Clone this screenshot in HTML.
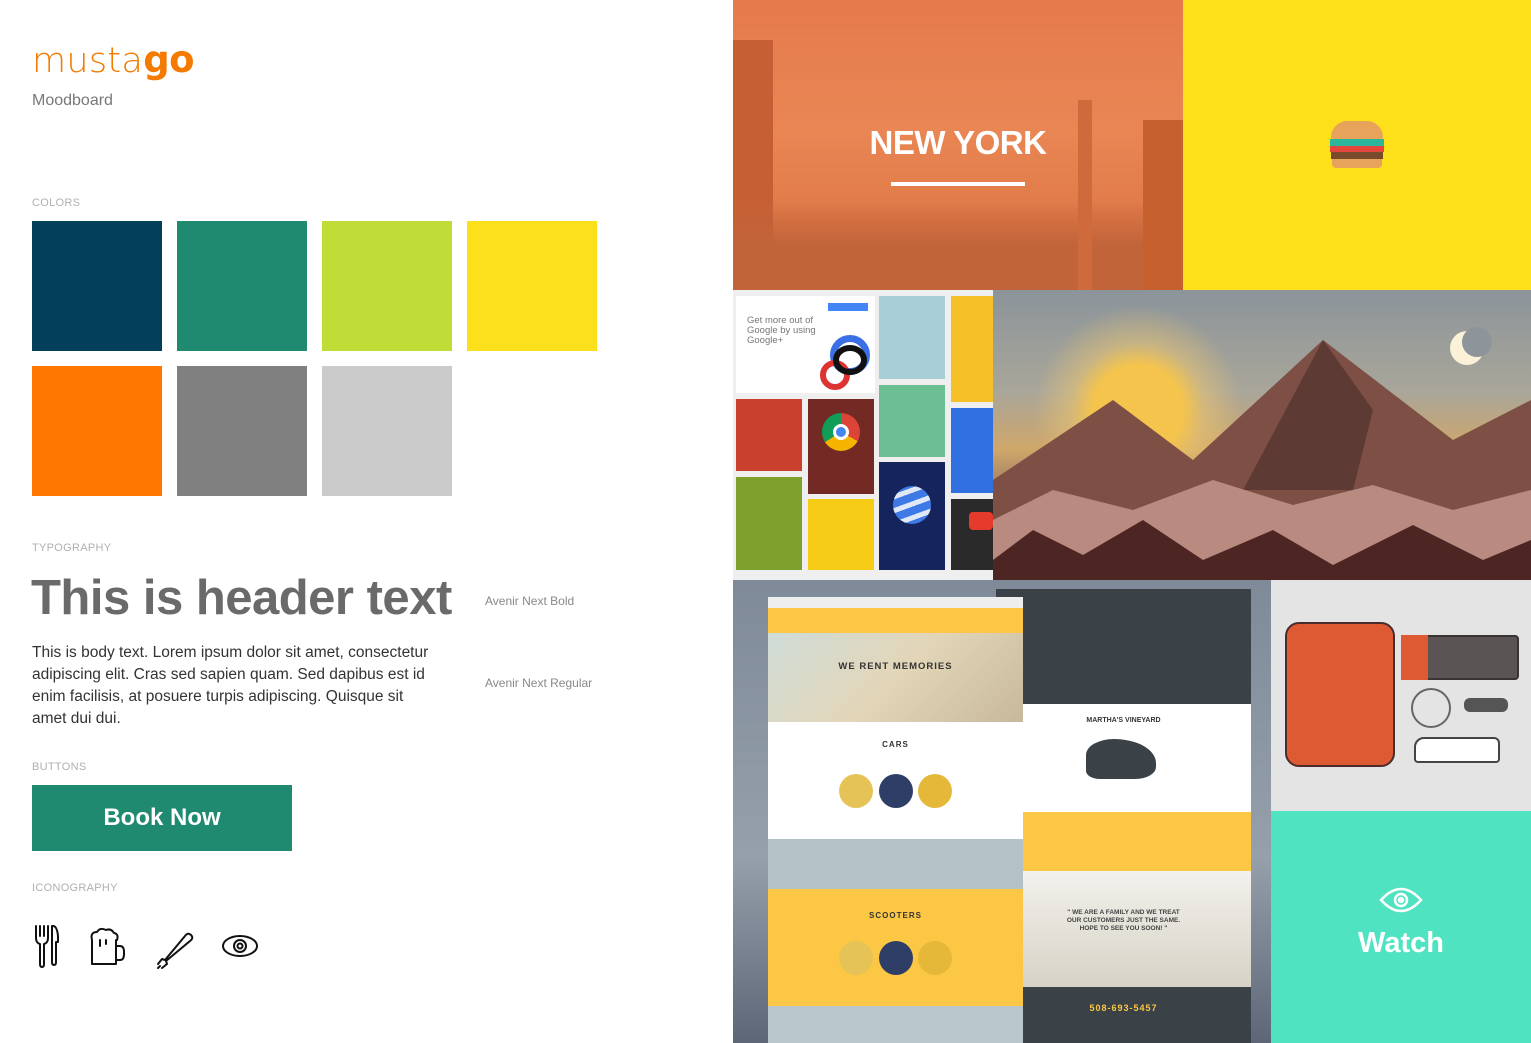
<!DOCTYPE html>
<html><head><meta charset="utf-8"><style>
*{margin:0;padding:0;box-sizing:border-box}
body{width:1531px;height:1043px;overflow:hidden;background:#fff;font-family:"Liberation Sans",sans-serif;position:relative}
.a{position:absolute}
.lbl{position:absolute;left:32px;font-size:11px;color:#b0b0b0;letter-spacing:.3px}
.sw{position:absolute;width:130px;height:130px}
</style></head><body>
<div class="a" style="left:32px;top:38px;font-size:35px;color:#f47b00;letter-spacing:0.3px;font-family:'DejaVu Sans',sans-serif;font-weight:200">musta<b style="font-size:37px;font-weight:bold;letter-spacing:-0.5px">go</b></div>
<div class="a" style="left:32px;top:92px;font-size:16px;color:#777">Moodboard</div>

<div class="lbl" style="top:197px">COLORS</div>
<div class="sw" style="left:32px;top:221px;background:#023f5a"></div>
<div class="sw" style="left:177px;top:221px;background:#1f8a6f"></div>
<div class="sw" style="left:322px;top:221px;background:#bfdc37"></div>
<div class="sw" style="left:467px;top:221px;background:#fde01c"></div>
<div class="sw" style="left:32px;top:366px;background:#fe7600"></div>
<div class="sw" style="left:177px;top:366px;background:#808080"></div>
<div class="sw" style="left:322px;top:366px;background:#cbcbcb"></div>

<div class="lbl" style="top:542px">TYPOGRAPHY</div>
<div class="a" style="left:31px;top:570px;font-size:49px;font-weight:bold;color:#6a6a6a;letter-spacing:-0.5px;white-space:nowrap">This is header text</div>
<div class="a" style="left:485px;top:594px;font-size:12px;color:#888">Avenir Next Bold</div>
<div class="a" style="left:32px;top:642px;width:403px;font-size:15.5px;line-height:22px;color:#333">This is body text. Lorem ipsum dolor sit amet, consectetur adipiscing elit. Cras sed sapien quam. Sed dapibus est id enim facilisis, at posuere turpis adipiscing. Quisque sit amet dui dui.</div>
<div class="a" style="left:485px;top:676px;font-size:12px;color:#888">Avenir Next Regular</div>

<div class="lbl" style="top:761px">BUTTONS</div>
<div class="a" style="left:32px;top:785px;width:260px;height:66px;background:#1f8a6f;color:#fff;font-weight:bold;font-size:24px;text-align:center;line-height:66px">Book Now</div>

<div class="lbl" style="top:882px">ICONOGRAPHY</div>
<svg class="a" style="left:30px;top:920px" width="240" height="52" viewBox="0 0 240 52" fill="none" stroke="#111" stroke-width="2" stroke-linecap="round" stroke-linejoin="round">
<path d="M6 6v12q0 5 4 6v20q0 3 2 3t2-3V24q4-1 4-6V6M10 6v10M14 6v10"/>
<path d="M23 6q4 0 5 10v6h-2v20q0 3-2 3t-2-3V6z"/>
<path d="M62 20q-2-8 5-8q3-5 9-2q5-2 8 3q5 1 3 7M62 20v24h24V20M86 26h4q4 0 4 6v2q0 6-4 6h-4M70 20v6M76 20v4"/>
<path d="M128 44l4-5 3 1 20-24q3-4 6-1t-1 6l-24 20 1 3-5 4M130 46l-2 2"/>
<ellipse cx="210" cy="26" rx="17" ry="10"/><circle cx="210" cy="26" r="6"/><circle cx="210" cy="26" r="2.5"/>
</svg>

<!-- NY -->
<div class="a" style="left:733px;top:0;width:450px;height:290px;background:linear-gradient(180deg,#e57a4c 0%,#e98654 45%,#d86f3f 100%);overflow:hidden">
<div class="a" style="left:0;top:40px;width:40px;height:250px;background:#c75f34"></div>
<div class="a" style="left:0;top:200px;width:450px;height:90px;background:linear-gradient(180deg,rgba(190,90,45,0),#c2643a 50%)"></div>
<div class="a" style="left:345px;top:100px;width:14px;height:190px;background:#cf6a3c"></div>
<div class="a" style="left:410px;top:120px;width:40px;height:170px;background:#c6612f"></div>
<div class="a" style="left:0;top:124px;width:450px;text-align:center;color:#fff;font-weight:bold;font-size:33px;letter-spacing:-0.5px">NEW YORK</div>
<div class="a" style="left:158px;top:182px;width:134px;height:4px;background:#fff"></div>
</div>
<div class="a" style="left:1183px;top:0;width:348px;height:290px;background:#fde01a">
<div class="a" style="left:148px;top:121px;width:52px;height:18px;background:#e8a35a;border-radius:26px 26px 3px 3px"></div>
<div class="a" style="left:147px;top:139px;width:54px;height:7px;background:#2bb59a"></div>
<div class="a" style="left:147px;top:146px;width:54px;height:6px;background:#e5463c"></div>
<div class="a" style="left:148px;top:152px;width:52px;height:7px;background:#7a4a2d"></div>
<div class="a" style="left:149px;top:159px;width:50px;height:9px;background:#e8a35a;border-radius:0 0 4px 4px"></div>
</div>

<!-- google -->
<div class="a" style="left:733px;top:290px;width:260px;height:290px;background:#efefef;overflow:hidden">
<div class="a" style="left:3px;top:6px;width:139px;height:97px;background:#fff"></div>
<div class="a" style="left:14px;top:26px;font-size:9.5px;line-height:10px;color:#777">Get more out of<br>Google by using<br>Google+</div>
<div class="a" style="left:95px;top:13px;width:40px;height:8px;background:#4285f4"></div>
<div class="a" style="left:97px;top:45px;width:40px;height:40px;border:7px solid #3a6fe5;border-radius:50%"></div>
<div class="a" style="left:87px;top:70px;width:30px;height:30px;border:6px solid #d33;border-radius:50%"></div>
<div class="a" style="left:100px;top:55px;width:34px;height:30px;border:6px solid #111;border-radius:50%"></div>
<div class="a" style="left:146px;top:6px;width:66px;height:83px;background:#a8ced8"></div>
<div class="a" style="left:218px;top:6px;width:42px;height:106px;background:#f6c029"></div>
<div class="a" style="left:3px;top:109px;width:66px;height:72px;background:#c9412c"></div>
<div class="a" style="left:75px;top:109px;width:66px;height:95px;background:#742a24"></div>
<div class="a" style="left:89px;top:123px;width:38px;height:38px;border-radius:50%;background:conic-gradient(#db4437 0 33%,#f4b400 0 66%,#0f9d58 0);"></div>
<div class="a" style="left:100px;top:134px;width:16px;height:16px;border-radius:50%;background:#4285f4;border:3px solid #fff"></div>
<div class="a" style="left:146px;top:95px;width:66px;height:72px;background:#6cbf93"></div>
<div class="a" style="left:218px;top:118px;width:42px;height:85px;background:#2f6fe0"></div>
<div class="a" style="left:3px;top:187px;width:66px;height:93px;background:#7ea12d"></div>
<div class="a" style="left:75px;top:209px;width:66px;height:71px;background:#f5cb16"></div>
<div class="a" style="left:146px;top:172px;width:66px;height:108px;background:#16245e"></div>
<div class="a" style="left:160px;top:196px;width:38px;height:38px;border-radius:50%;background:repeating-linear-gradient(160deg,#3d7ae6 0 8px,#dfe8f6 8px 13px)"></div>
<div class="a" style="left:218px;top:209px;width:42px;height:71px;background:#2a2a2a"></div>
<div class="a" style="left:236px;top:222px;width:24px;height:18px;background:#e53a2c;border-radius:4px"></div>
</div>

<!-- mountains -->
<div class="a" style="left:993px;top:290px;width:538px;height:290px;overflow:hidden;background:linear-gradient(180deg,#8b949a 0%,#a9a69a 35%,#cfa76a 55%,#9a7a66 70%,#6b3f35 100%)">
<div class="a" style="left:40px;top:15px;width:210px;height:210px;border-radius:50%;background:radial-gradient(circle,#f5c44c 0 30%,rgba(240,200,110,.5) 45%,rgba(240,200,110,0) 70%)"></div>
<svg class="a" style="left:0;top:0" width="538" height="290">
<polygon points="0,190 120,110 200,170 330,50 460,150 538,110 538,290 0,290" fill="#7d4f45"/>
<polygon points="330,50 380,120 360,200 250,200" fill="#5e3a35"/>
<polygon points="0,230 60,200 140,220 220,190 300,215 380,195 460,220 538,200 538,290 0,290" fill="#b98a80"/>
<polygon points="0,270 40,240 90,265 150,230 210,270 280,240 340,275 420,235 490,270 538,250 538,290 0,290" fill="#4d2623"/>
<circle cx="474" cy="58" r="17" fill="#fbf1d8"/><circle cx="484" cy="52" r="15" fill="#8d959b"/>
</svg>
</div>

<!-- websites -->
<div class="a" style="left:733px;top:580px;width:538px;height:463px;background:linear-gradient(180deg,#7f8a99 0%,#95a0ab 60%,#5d6677 100%);overflow:hidden">
<div class="a" style="left:263px;top:9px;width:255px;height:454px;background:#3a4147">
<div style="height:115px"></div>
<div style="height:108px;background:#fff;position:relative"><div class="a" style="left:0;top:13px;width:255px;text-align:center;font-size:7px;font-weight:bold;color:#333">MARTHA'S VINEYARD</div><div class="a" style="left:90px;top:35px;width:70px;height:40px;background:#3a4147;border-radius:40% 60% 30% 20%"></div></div>
<div style="height:59px;background:#fbc745"></div>
<div style="height:116px;background:linear-gradient(180deg,#f2f1ec,#d6d2c6);position:relative"><div class="a" style="left:0;top:38px;width:255px;text-align:center;font-size:6.5px;font-weight:bold;color:#444;line-height:8px">" WE ARE A FAMILY AND WE TREAT<br>OUR CUSTOMERS JUST THE SAME.<br>HOPE TO SEE YOU SOON! "</div></div>
<div class="a" style="left:0;top:414px;width:255px;text-align:center;font-size:9px;font-weight:bold;color:#fbc745;letter-spacing:1px">508-693-5457</div>
</div>
<div class="a" style="left:35px;top:17px;width:255px;height:446px;background:#fff">
<div style="height:11px;background:#eee"></div>
<div style="height:25px;background:#fbc745"></div>
<div style="height:89px;background:linear-gradient(135deg,#cfdcd8,#e3d6b8 50%,#c7b89b);position:relative"><div class="a" style="left:0;top:28px;width:255px;text-align:center;font-size:9.5px;font-weight:bold;letter-spacing:1px;color:#333">WE RENT MEMORIES</div></div>
<div style="height:117px;background:#fff;position:relative">
<div class="a" style="left:0;top:18px;width:255px;text-align:center;font-size:8px;font-weight:bold;letter-spacing:1px;color:#333">CARS</div>
<div class="a" style="left:71px;top:52px;width:34px;height:34px;border-radius:50%;background:#e6c357"></div>
<div class="a" style="left:111px;top:52px;width:34px;height:34px;border-radius:50%;background:#2f3e66"></div>
<div class="a" style="left:150px;top:52px;width:34px;height:34px;border-radius:50%;background:#e5b83a"></div>
</div>
<div style="height:50px;background:#b4c2c8"></div>
<div style="height:117px;background:#fbc745;position:relative">
<div class="a" style="left:0;top:22px;width:255px;text-align:center;font-size:8px;font-weight:bold;letter-spacing:1px;color:#333">SCOOTERS</div>
<div class="a" style="left:71px;top:52px;width:34px;height:34px;border-radius:50%;background:#e6c357"></div>
<div class="a" style="left:111px;top:52px;width:34px;height:34px;border-radius:50%;background:#2f3e66"></div>
<div class="a" style="left:150px;top:52px;width:34px;height:34px;border-radius:50%;background:#e5b83a"></div>
</div>
<div style="height:40px;background:#b9c6cc"></div>
</div>
</div>

<!-- illustration -->
<div class="a" style="left:1271px;top:580px;width:260px;height:231px;background:#e5e4e4">
<div class="a" style="left:14px;top:42px;width:110px;height:145px;background:#de5a33;border:2px solid #4a2c2a;border-radius:14px"></div>
<div class="a" style="left:130px;top:55px;width:118px;height:45px;background:#5b5454;border:2px solid #3a3333;border-radius:4px"></div>
<div class="a" style="left:130px;top:55px;width:27px;height:45px;background:#de5a33"></div>
<div class="a" style="left:140px;top:108px;width:40px;height:40px;border:2px solid #666;border-radius:50%"></div>
<div class="a" style="left:193px;top:118px;width:44px;height:14px;background:#555;border-radius:6px"></div>
<div class="a" style="left:143px;top:157px;width:86px;height:26px;background:#fff;border:2px solid #444;border-radius:10px 6px 4px 4px"></div>
</div>
<div class="a" style="left:1271px;top:811px;width:260px;height:232px;background:#4fe3c1">
<svg class="a" style="left:108px;top:75px" width="44" height="28" viewBox="0 0 44 28" fill="none" stroke="#fff" stroke-width="2.5"><path d="M2 14Q22-8 42 14Q22 36 2 14z"/><circle cx="22" cy="14" r="6"/><circle cx="22" cy="14" r="2" fill="#fff"/></svg>
<div class="a" style="left:0;top:116px;width:260px;text-align:center;color:#fff;font-weight:bold;font-size:29px">Watch</div>
</div>
</body></html>
